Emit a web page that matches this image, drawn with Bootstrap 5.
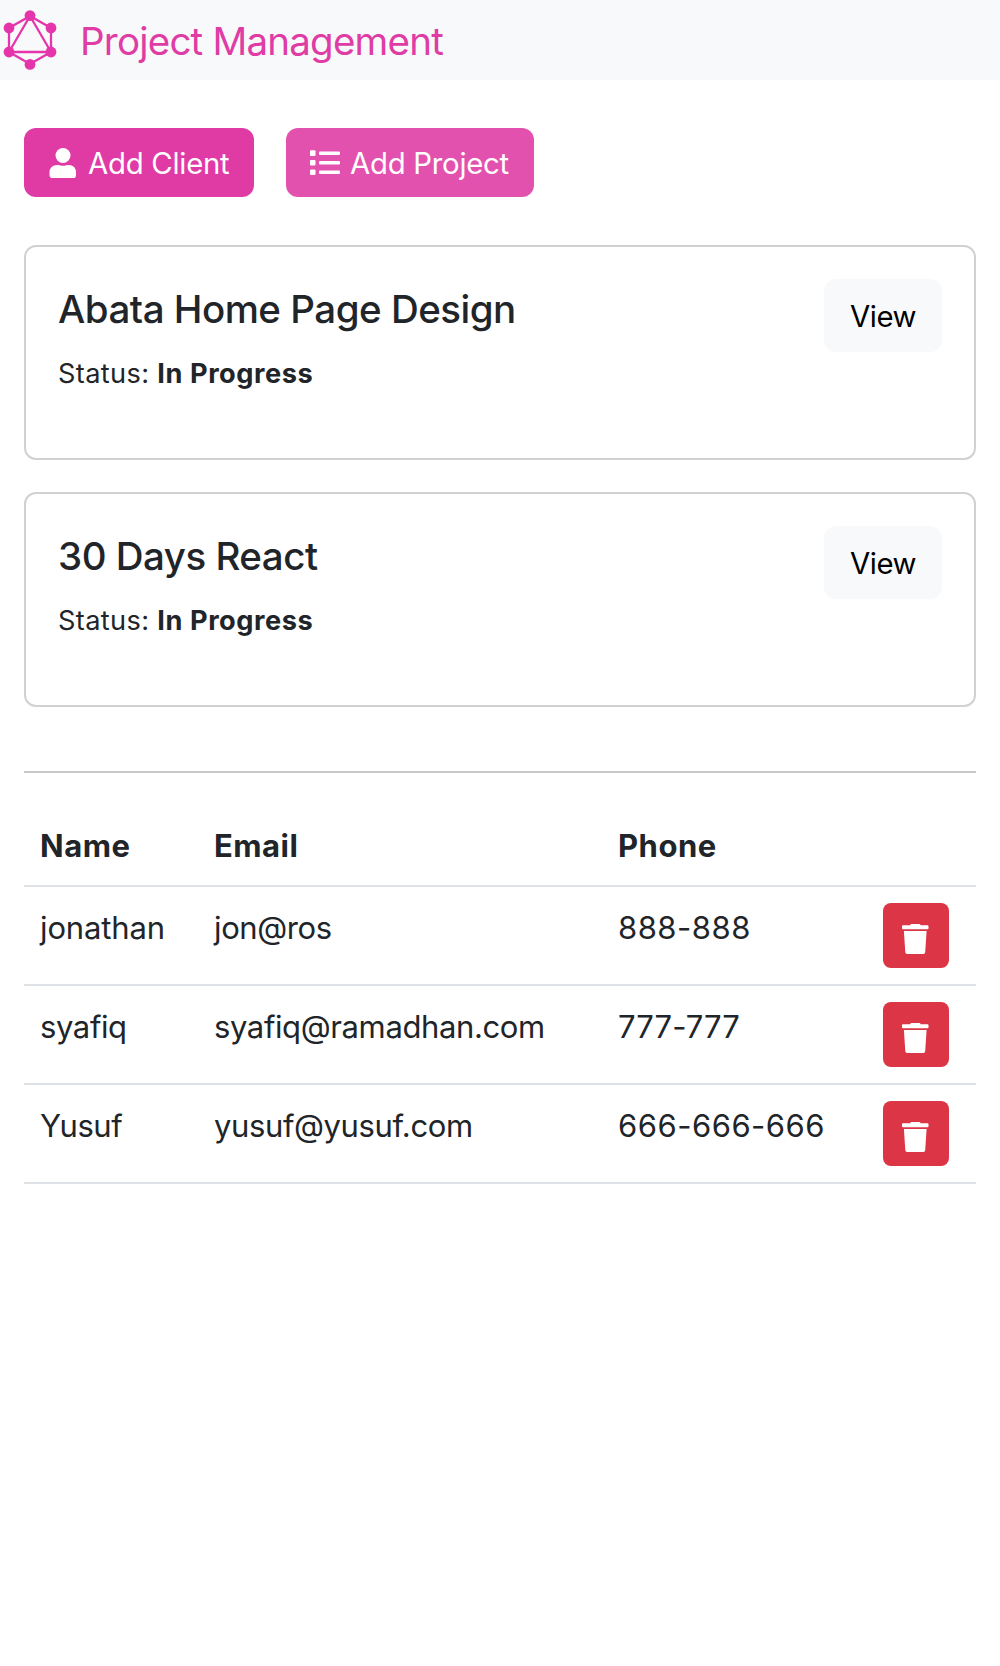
<!DOCTYPE html>
<html lang="en">
<head>
<meta charset="utf-8">
<meta name="viewport" content="width=device-width, initial-scale=1">
<title>Project Management</title>
<link href="https://cdn.jsdelivr.net/npm/bootstrap@5.3.0/dist/css/bootstrap.min.css" rel="stylesheet">
<style>
  body { font-family: Inter, "Liberation Sans", sans-serif; font-size: 31px; color: #212529; }
  svg { display: block; flex: none; }
  .topbar { height: 80px; background: #f8f9fb; }
  .topbar .navbar-brand { color: #df3ca5; font-size: 38.5px; letter-spacing: -.78px; line-height: 48px; gap: 20px; }
  .topbar .brand-text { padding-top: 1px; }
  .page { padding: 48px 24px; }
  .page .btn { font-size: 29.3px; letter-spacing: -.25px; border: 0; border-radius: 12px; line-height: 45px; }
  .actions { gap: 32px; margin-bottom: 48px; }
  .actions .btn { height: 69px; color: #fff; padding: 2px 24px 0; white-space: nowrap; }
  .actions svg { margin-bottom: 1px; }
  .btn-pink { width: 230px; background: #e03aa5; }
  .btn-pink-soft { width: 248px; background: #e351ae; }
  .projects { gap: 32px; }
  .projects .card { height: 215px; border: 2px solid #d1d1d1; border-radius: 12px; }
  .projects .card-body { padding: 32px; }
  .projects .card-title { font-size: 38.5px; letter-spacing: -.5px; line-height: 48px; margin: 6px 0 20px; }
  .status { font-size: 27.2px; letter-spacing: .35px; line-height: 42px; }
  .status strong { letter-spacing: .55px; }
  .projects .btn-light { width: 118px; height: 73px; background: #f8f9fb; color: #000; padding: 15px 0 0; letter-spacing: -.5px; }
  .divider { margin: 64px 0 32px; border-top: 2px solid #c8c9ca; opacity: 1; }
  .clients { table-layout: fixed; line-height: 48px; }
  .clients > * > tr > * { padding: 17px 16px 15px; border-bottom: 2px solid #dee2e6; vertical-align: top; }
  .clients > tbody > tr > .action-cell { padding: 16px; }
  .clients th { letter-spacing: .5px; }
  .clients td { letter-spacing: -.38px; }
  .clients td.digits { letter-spacing: .5px; }
  .clients td.sevens { letter-spacing: .1px; }
  .clients td.short-name { letter-spacing: -.12px; }
  .page .btn-danger { width: 66px; height: 65px; border-radius: 8px; background: #dc3545; padding: 0 1px 14px 0; line-height: 1; }
  .btn-danger svg { margin: 21px auto 0; }
</style>
</head>
<body>
<svg class="d-none" aria-hidden="true">
  <symbol id="trash" viewBox="0 0 27 30">
    <path d="M9.200 0h8.400q.8 0 .9 1.300h7q1 0 1 1v1.900q0 1-1 1H1q-1 0-1-1V2.300q0-1 1-1h7.300Q8.400 0 9.200 0zM1.900 7h22.700l-1.400 21.200q-.1 1.800-1.800 1.800H5.100q-1.700 0-1.800-1.800z"/>
  </symbol>
</svg>

<nav class="navbar topbar p-0">
  <a class="navbar-brand d-flex align-items-center p-0 m-0" href="#">
    <svg width="60" height="80" viewBox="0 0 60 80" fill="#e535ab" stroke="#e535ab">
      <path d="M30 16 51 28V52L30 64 9 52V28zM30 16 51 52H9z" fill="none" stroke-width="2.300"/>
      <g stroke="none"><circle cx="30" cy="15.600" r="5.400"/><circle cx="51" cy="28" r="5.400"/><circle cx="51" cy="52" r="5.400"/><circle cx="30" cy="64.400" r="5.400"/><circle cx="9" cy="52" r="5.400"/><circle cx="9" cy="28" r="5.400"/></g>
    </svg>
    <span class="brand-text">Project Management</span>
  </a>
</nav>

<main class="page">
  <div class="d-flex actions">
    <button type="button" class="btn btn-pink d-flex align-items-center">
      <svg class="me-2" width="32" height="30" viewBox="0 0 32 30" fill="#fff"><circle cx="15" cy="7.500" r="7.500"/><path d="M9.500 17q2.500 0 3.800.7h3.400q1.300-.7 3.800-.7 7.500 0 7.500 8v2.200q0 2.800-2.500 2.800h-21Q1.500 30 1.500 27.200V25q0-8 8-8z"/></svg>
      Add Client
    </button>
    <button type="button" class="btn btn-pink-soft d-flex align-items-center">
      <svg class="me-2" width="32" height="26" viewBox="0 0 32 26" fill="#fff"><rect y=".3" width="5.500" height="5.600" rx="1"/><rect y="9.900" width="5.500" height="5.600" rx="1"/><rect y="19.400" width="5.500" height="5.600" rx="1"/><rect x="9" y="1.400" width="21" height="3.700" rx="1"/><rect x="9" y="10.900" width="21" height="3.700" rx="1"/><rect x="9" y="20.400" width="21" height="3.700" rx="1"/></svg>
      Add Project
    </button>
  </div>

  <section class="d-flex flex-column projects">
    <div class="card">
      <div class="card-body d-flex justify-content-between align-items-start">
        <div>
          <h5 class="card-title">Abata Home Page Design</h5>
          <p class="status m-0">Status: <strong>In Progress</strong></p>
        </div>
        <a class="btn btn-light" href="#">View</a>
      </div>
    </div>
    <div class="card">
      <div class="card-body d-flex justify-content-between align-items-start">
        <div>
          <h5 class="card-title">30 Days React</h5>
          <p class="status m-0">Status: <strong>In Progress</strong></p>
        </div>
        <a class="btn btn-light" href="#">View</a>
      </div>
    </div>
  </section>

  <hr class="divider">

  <table class="table clients mb-0">
    <colgroup><col style="width:174px"><col style="width:404px"><col style="width:265px"><col style="width:109px"></colgroup>
    <thead>
      <tr><th>Name</th><th>Email</th><th>Phone</th><th></th></tr>
    </thead>
    <tbody>
      <tr>
        <td class="short-name">jonathan</td><td>jon@ros</td><td class="digits">888-888</td>
        <td class="action-cell"><button type="button" class="btn btn-danger d-block" aria-label="Delete"><svg width="27" height="30" fill="#fff"><use href="#trash"/></svg></button></td>
      </tr>
      <tr>
        <td>syafiq</td><td>syafiq@ramadhan.com</td><td class="digits sevens">777-777</td>
        <td class="action-cell"><button type="button" class="btn btn-danger d-block" aria-label="Delete"><svg width="27" height="30" fill="#fff"><use href="#trash"/></svg></button></td>
      </tr>
      <tr>
        <td>Yusuf</td><td>yusuf@yusuf.com</td><td class="digits">666-666-666</td>
        <td class="action-cell"><button type="button" class="btn btn-danger d-block" aria-label="Delete"><svg width="27" height="30" fill="#fff"><use href="#trash"/></svg></button></td>
      </tr>
    </tbody>
  </table>
</main>
<script src="https://cdn.jsdelivr.net/npm/bootstrap@5.3.0/dist/js/bootstrap.bundle.min.js"></script>
</body>
</html>
